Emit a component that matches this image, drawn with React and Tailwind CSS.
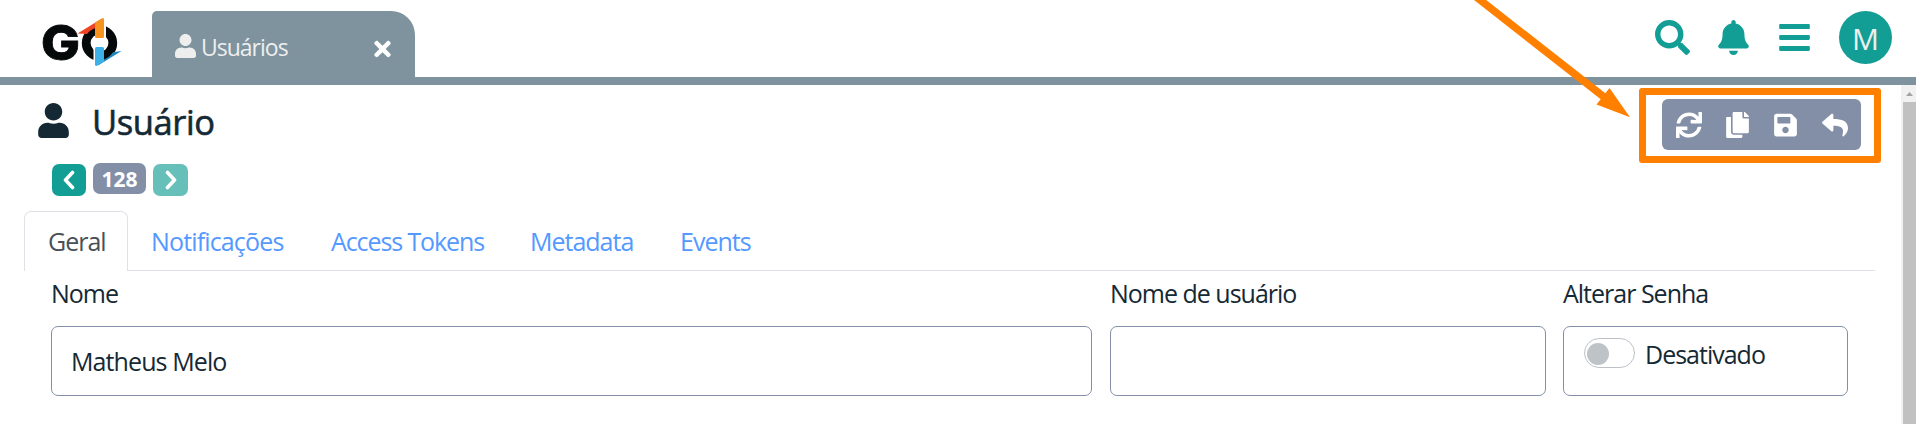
import React from "react";
import { FaUser, FaTimes, FaSearch, FaBell, FaBars, FaSync, FaCopy, FaSave, FaReply } from "react-icons/fa";

function Logo() {
  return (
    <svg className="ml-[30px] h-[77px] w-[94px] shrink-0" viewBox="30 0 94 77">
      <text x="41" y="60" fontFamily="Inter, sans-serif" fontWeight="800" fontSize="48" textLength="39" lengthAdjust="spacingAndGlyphs" fill="#050909" stroke="#050909" strokeWidth="0.800">G</text>
      <circle cx="99.500" cy="43" r="13.300" fill="none" stroke="#050909" strokeWidth="8.800" />
      <path d="M77.500 33.500 L102 18.500 V28 L94 28.500 Q89.500 30.500 87 34 Z" fill="#ee4423" />
      <path d="M121.500 51 L98 65.500 V60 L104 59.500 Q110 57 113 52.300 Z" fill="#1b87bd" />
      <path d="M103 22 H106 V38 H103 Z" fill="#fff" />
      <path d="M93.500 48 H96 V60 H93.500 Z" fill="#fff" />
      <path d="M95 22.500 L102.500 18.200 Q104 17.700 104 19.500 V36.500 Q104 38 102.500 38 H96.500 Q95 38 95 36.500 Z" fill="#f7941e" />
      <path d="M95 48.500 Q95 47 96.500 47 H102.500 Q104 47 104 48.500 V61.500 L97 65.800 Q95 66.500 95 64.500 Z" fill="#3db0e8" />
    </svg>
  );
}

function Chevron({ points }) {
  return (
    <svg className="h-5 w-4" viewBox="0 0 16 20" fill="none" stroke="#fff" strokeWidth="3.600" strokeLinecap="round" strokeLinejoin="round">
      <polyline points={points} />
    </svg>
  );
}

function Header() {
  return (
    <header className="flex h-[85px] items-start border-b-8 border-[#7e939e]">
      <Logo />
      <div className="ml-[28px] mt-[11px] flex h-[66px] w-[263px] shrink-0 rounded-tl-[5px] rounded-tr-[24px] bg-[#7e939e]">
        <FaUser className="ml-[23px] mt-[23px] h-6 w-[21px] text-[#eee]" />
        <span className="ml-[5px] mt-[19px] w-[173px] text-[23px] leading-[34px] tracking-[-1px] text-[#eee]">Usuários</span>
        <FaTimes className="mt-[26px] h-6 w-[17px] text-white" />
      </div>
      <div className="mr-6 ml-auto flex text-[#139e95]">
        <FaSearch className="mt-5 h-[35px] w-[35px]" />
        <FaBell className="ml-7 mt-5 h-[35px] w-[31px]" />
        <FaBars className="ml-[30px] mt-5 h-[35px] w-[31px]" />
        <div className="ml-[29px] mt-[11px] flex h-[53px] w-[53px] items-center justify-center rounded-full bg-[#139e95] pt-px text-[30px] text-[#eee]">M</div>
      </div>
    </header>
  );
}

function Toolbar() {
  return (
    <div className="mr-[20px] ml-auto mt-[3px] h-[75px] w-[242px] rounded-[3px] border-[7px] border-[#ff8000] px-4 pt-1">
      <div className="flex h-[51px] w-[199px] items-center rounded-[6px] bg-[#838fa6] pl-[14px] text-white">
        <FaSync className="h-[26px] w-[26px]" />
        <FaCopy className="ml-6 h-[26px] w-[23px]" />
        <FaSave className="ml-[25px] h-[26px] w-[23px]" />
        <FaReply className="ml-[25px] h-[26px] w-[26px]" />
      </div>
    </div>
  );
}

function Tab({ children, className }) {
  return <span className={"mt-[13px] whitespace-nowrap leading-[34px] text-[#5599ff] " + className}>{children}</span>;
}

function Field({ label, className, children }) {
  return (
    <div className={className}>
      <div className="h-[55px] pt-[4px] leading-[36px] tracking-[-1px]">
        <span>{label}</span>
      </div>
      <div className="flex h-[70px] rounded-[7px] border border-[#838fa6]">{children}</div>
    </div>
  );
}

export default function App() {
  return (
    <div className="relative h-[424px] w-[1916px] overflow-hidden bg-white font-['Open_Sans',sans-serif] text-[25px] text-[#152935]">
      <Header />
      <div className="flex h-[339px]">
        <main className="w-[1901px]">
          <div className="flex h-[78px]">
            <FaUser className="ml-[38px] mt-[18px] h-[35px] w-[31px]" />
            <h1 className="ml-[23px] mt-[11px] text-[34.5px] leading-[51px] tracking-[-0.4px] [-webkit-text-stroke:0.6px_#152935]">Usuário</h1>
            <Toolbar />
          </div>
          <div className="flex h-[48px] pl-[52px]">
            <div className="mt-px flex h-8 w-[34px] items-center justify-center rounded-[7px] bg-[#139e95]"><Chevron points="11.500,2.500 4.500,10 11.500,17.500" /></div>
            <div className="ml-[7px] flex h-[31px] w-[53px] items-center justify-center rounded-[7px] bg-[#838fa6] pt-[3px] text-[21px] font-bold text-white">128</div>
            <div className="ml-[7px] mt-px flex h-8 w-[35px] items-center justify-center rounded-[7px] bg-[#66bfb9]"><Chevron points="4.500,2.500 11.500,10 4.500,17.500" /></div>
          </div>
          <nav className="ml-[24px] flex h-[60px] w-[1851px]">
            <div className="w-[104px] rounded-t-[7px] border border-b-0 border-[#dee2e6] pl-[23px] pt-[12px] leading-[34px] tracking-[-1px] text-[#495057]">Geral</div>
            <div className="flex h-[60px] flex-1 border-b border-[#dee2e6] pl-[23px]">
              <Tab className="w-[180px] tracking-[-0.85px]">Notificações</Tab>
              <Tab className="w-[199px] tracking-[-1.1px]">Access Tokens</Tab>
              <Tab className="w-[150px] tracking-[-1px]">Metadata</Tab>
              <Tab className="tracking-[-1px]">Events</Tab>
            </div>
          </nav>
          <div className="flex pl-[51px]">
            <Field label="Nome" className="w-[1041px]">
              <span className="ml-[19px] leading-[69px] tracking-[-0.9px]">Matheus Melo</span>
            </Field>
            <Field label="Nome de usuário" className="ml-[18px] w-[436px]" />
            <Field label="Alterar Senha" className="ml-[17px] w-[285px]">
              <span className="ml-5 mt-[11px] h-[30px] w-[51px] rounded-full border border-[#bdc1c6] pl-[2px] pt-1">
                <span className="block h-[22px] w-[22px] rounded-full bg-[#bdc3c7]" />
              </span>
              <span className="ml-[10px] mt-[10px] leading-[34px] tracking-[-1px]">Desativado</span>
            </Field>
          </div>
        </main>
        <aside className="w-[15px] bg-[#f1f1f1] pl-[2px]">
          <svg className="h-[17px] w-[13px]" viewBox="0 0 13 17"><path d="M3 11 L6.500 7 L10 11 Z" fill="#a3a3a3" /></svg>
          <div className="h-[322px] bg-[#c1c1c1]" />
        </aside>
      </div>
      <svg className="pointer-events-none absolute left-[1460px] top-0 h-[130px] w-[180px]" viewBox="1460 0 180 130">
        <path d="M1475 -4 L1604 97" stroke="#ff8000" strokeWidth="7.500" />
        <path d="M1609.500 88 L1630 117.300 L1596.500 104.500 Z" fill="#ff8000" />
      </svg>
    </div>
  );
}
